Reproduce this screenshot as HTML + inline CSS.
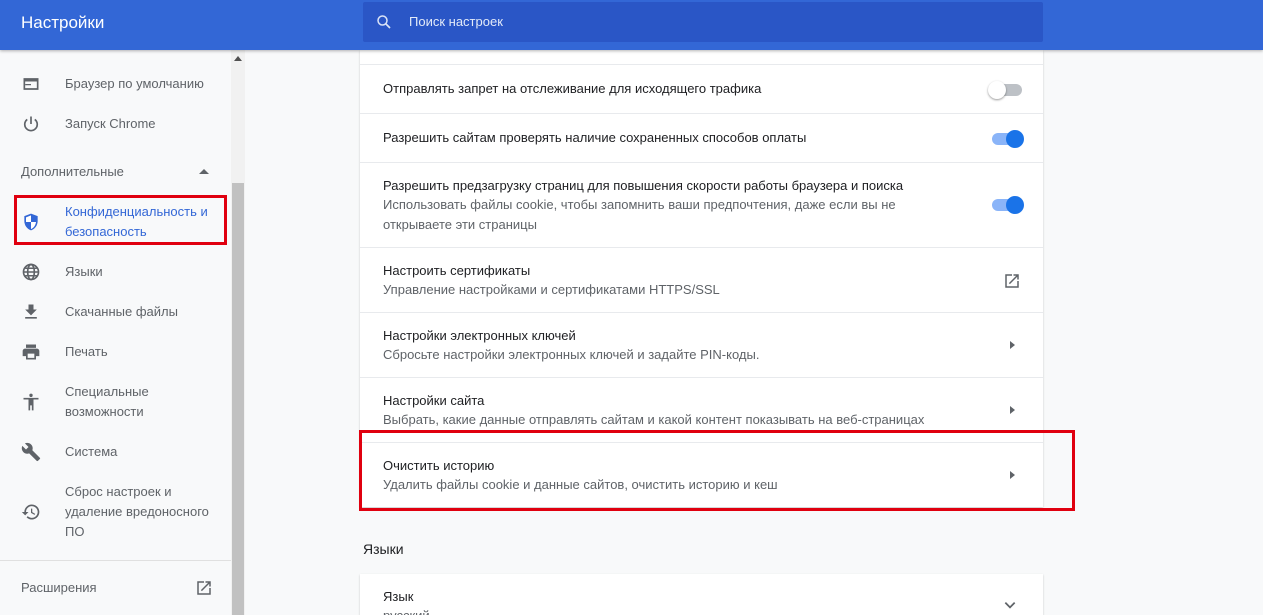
<!DOCTYPE html>
<html><head><meta charset="utf-8"><style>
*{margin:0;padding:0;box-sizing:border-box}
html{width:1263px;height:615px;overflow:hidden}
body{width:1263px;height:615px;overflow:hidden;background:#f8f9fa;font-family:"Liberation Sans",Arial,sans-serif;position:relative;color:#202124}
.hdr{position:absolute;left:0;top:0;width:1263px;height:50px;background:#3367d6;box-shadow:0 1px 3px rgba(0,0,0,.3);z-index:5}
.hdr .t{position:absolute;left:21px;top:13px;color:#fff;font-size:17px}
.srch{position:absolute;left:363px;top:2px;width:680px;height:40px;background:#2a56c6;border-radius:2px}
.srch span{position:absolute;left:46px;top:12px;color:#e3eaf8;font-size:13px}
.side{position:absolute;left:0;top:50px;width:231px;height:565px;background:#f8f9fa}
.sb{position:absolute;left:231px;top:50px;width:14px;height:565px;background:#f1f1f1}
.sb .th{position:absolute;left:1px;top:133px;width:12px;height:432px;background:#c1c1c1}
.it{position:absolute;left:65px;font-size:13px;color:#5f6368;line-height:20px}
.ic{position:absolute;left:21px;width:20px;height:20px}
.card{position:absolute;left:360px;top:50px;width:683px;height:457px;background:#fff;box-shadow:0 1px 2px rgba(0,0,0,.2)}
.row{position:absolute;left:0;width:683px;border-top:1px solid #e8eaed}
.p{position:absolute;left:23px;font-size:13px;color:#202124}
.s{position:absolute;left:23px;font-size:13px;color:#5f6368;line-height:20px}
.tg{position:absolute;left:632px;width:30px;height:12px;border-radius:6px}
.tg i{position:absolute;top:-3px;width:18px;height:18px;border-radius:50%}
.arr{position:absolute;left:650px;width:0;height:0;border-top:4px solid transparent;border-bottom:4px solid transparent;border-left:5px solid #5f6368}
.red{position:absolute;border:3px solid #e0000f}
</style></head><body>
<div class="hdr"><div class="t">Настройки</div>
<div class="srch"><svg style="position:absolute;left:12px;top:11px" width="18" height="18" viewBox="0 0 24 24"><circle cx="10" cy="10" r="6" fill="none" stroke="#dbe4f7" stroke-width="2"/><path d="M14.5 14.5L20 20" stroke="#dbe4f7" stroke-width="2.2"/></svg><span>Поиск настроек</span></div></div>

<div class="side">
<svg class="ic" style="top:24px" viewBox="0 0 24 24"><path d="M3 5h18v14H3z M5 9h14v8H5z" fill="#5f6368" fill-rule="evenodd"/><rect x="5" y="12" width="7" height="1.5" fill="#5f6368"/></svg>
<div class="it" style="top:24px">Браузер по умолчанию</div>
<svg class="ic" style="top:64px" viewBox="0 0 24 24"><path d="M12 3v9" stroke="#5f6368" stroke-width="2"/><path d="M7.5 6.5A7.5 7.5 0 1 0 16.5 6.5" fill="none" stroke="#5f6368" stroke-width="2"/></svg>
<div class="it" style="top:64px">Запуск Chrome</div>
<div class="it" style="left:21px;top:112px">Дополнительные</div>
<div style="position:absolute;left:199px;top:119px;border-left:5px solid transparent;border-right:5px solid transparent;border-bottom:5px solid #5f6368"></div>
<svg class="ic" style="top:162px" viewBox="0 0 24 24"><path d="M12 2L4 5v6c0 5 3.4 9.7 8 11 4.6-1.3 8-6 8-11V5z" fill="#3367d6"/><path d="M12 4v8H6V6.4zM12 12h6c-.5 4-3 7.4-6 8.5z" fill="#fff"/></svg>
<div class="it" style="top:152px;color:#3367d6">Конфиденциальность и<br>безопасность</div>
<svg class="ic" style="top:212px" viewBox="0 0 24 24"><circle cx="12" cy="12" r="9" fill="none" stroke="#5f6368" stroke-width="2"/><ellipse cx="12" cy="12" rx="4" ry="9" fill="none" stroke="#5f6368" stroke-width="2"/><path d="M3 12h18M5 7.5h14M5 16.5h14" stroke="#5f6368" stroke-width="1.8"/></svg>
<div class="it" style="top:212px">Языки</div>
<svg class="ic" style="top:252px" viewBox="0 0 24 24"><path d="M19 9h-4V3H9v6H5l7 7zM5 18v2h14v-2z" fill="#5f6368"/></svg>
<div class="it" style="top:252px">Скачанные файлы</div>
<svg class="ic" style="top:292px" viewBox="0 0 24 24"><path d="M19 8H5c-1.7 0-3 1.3-3 3v6h4v4h12v-4h4v-6c0-1.7-1.3-3-3-3zm-3 11H8v-5h8zM18 3H6v4h12z" fill="#5f6368"/></svg>
<div class="it" style="top:292px">Печать</div>
<svg class="ic" style="top:342px" viewBox="0 0 24 24"><circle cx="12" cy="4" r="2" fill="#5f6368"/><path d="M21 9h-6v13h-2v-6h-2v6H9V9H3V7h18z" fill="#5f6368"/></svg>
<div class="it" style="top:332px">Специальные<br>возможности</div>
<svg class="ic" style="top:392px" viewBox="0 0 24 24"><path d="M22.7 19l-9.1-9.1c.9-2.3.4-5-1.5-6.9-2-2-5-2.4-7.4-1.3L9 6 6 9 1.6 4.7C.4 7.1.9 10.1 2.9 12.1c1.9 1.9 4.6 2.4 6.9 1.5l9.1 9.1c.4.4 1 .4 1.4 0l2.3-2.3c.5-.4.5-1.1.1-1.4z" fill="#5f6368"/></svg>
<div class="it" style="top:392px">Система</div>
<svg class="ic" style="top:452px" viewBox="0 0 24 24"><path d="M13 3a9 9 0 0 0-9 9H1l4 4 4-4H6a7 7 0 1 1 2.1 5l-1.4 1.4A9 9 0 1 0 13 3zm-1 5v5l4.3 2.5.7-1.2-3.5-2.1V8z" fill="#5f6368"/></svg>
<div class="it" style="top:432px">Сброс настроек и<br>удаление вредоносного<br>ПО</div>
<div style="position:absolute;left:0;top:510px;width:231px;border-top:1px solid #e0e0e0"></div>
<div class="it" style="left:21px;top:528px">Расширения</div>
<svg style="position:absolute;left:195px;top:529px" width="18" height="18" viewBox="0 0 24 24"><path d="M19 19H5V5h7V3H3v18h18v-9h-2zM14 3v2h3.6l-9.8 9.8 1.4 1.4L19 6.4V10h2V3z" fill="#5f6368"/></svg>
</div>
<div class="red" style="left:14px;top:195px;width:213px;height:50px"></div>
<div class="sb"><div style="position:absolute;left:3px;top:6px;border-left:4px solid transparent;border-right:4px solid transparent;border-bottom:5px solid #505050"></div><div class="th"></div></div>

<div class="card">
<div class="row" style="top:14px;height:49px"><div class="p" style="top:16px">Отправлять запрет на отслеживание для исходящего трафика</div><div class="tg" style="top:19px;background:#bdc1c6"><i style="left:-4px;background:#fff;box-shadow:0 1px 2px rgba(0,0,0,.4)"></i></div></div>
<div class="row" style="top:63px;height:49px"><div class="p" style="top:16px">Разрешить сайтам проверять наличие сохраненных способов оплаты</div><div class="tg" style="top:19px;background:#8ab4f8"><i style="left:14px;background:#1a73e8"></i></div></div>
<div class="row" style="top:112px;height:85px"><div class="p" style="top:15px">Разрешить предзагрузку страниц для повышения скорости работы браузера и поиска</div><div class="s" style="top:32px">Использовать файлы cookie, чтобы запомнить ваши предпочтения, даже если вы не<br>открываете эти страницы</div><div class="tg" style="top:36px;background:#8ab4f8"><i style="left:14px;background:#1a73e8"></i></div></div>
<div class="row" style="top:197px;height:65px"><div class="p" style="top:15px">Настроить сертификаты</div><div class="s" style="top:32px">Управление настройками и сертификатами HTTPS/SSL</div><svg style="position:absolute;left:643px;top:24px" width="18" height="18" viewBox="0 0 24 24"><path d="M19 19H5V5h7V3H3v18h18v-9h-2zM14 3v2h3.6l-9.8 9.8 1.4 1.4L19 6.4V10h2V3z" fill="#5f6368"/></svg></div>
<div class="row" style="top:262px;height:65px"><div class="p" style="top:15px">Настройки электронных ключей</div><div class="s" style="top:32px">Сбросьте настройки электронных ключей и задайте PIN-коды.</div><div class="arr" style="top:28px"></div></div>
<div class="row" style="top:327px;height:65px"><div class="p" style="top:15px">Настройки сайта</div><div class="s" style="top:32px">Выбрать, какие данные отправлять сайтам и какой контент показывать на веб-страницах</div><div class="arr" style="top:28px"></div></div>
<div class="row" style="top:392px;height:65px"><div class="p" style="top:15px">Очистить историю</div><div class="s" style="top:32px">Удалить файлы cookie и данные сайтов, очистить историю и кеш</div><div class="arr" style="top:28px"></div></div>
</div>
<div class="red" style="left:359px;top:430px;width:716px;height:81px"></div>
<div style="position:absolute;left:363px;top:541px;font-size:14px;color:#202124">Языки</div>
<div class="card" style="top:574px;height:41px;overflow:hidden"><div class="p" style="top:15px">Язык</div><div class="s" style="top:32px">русский</div><svg style="position:absolute;left:643px;top:24px" width="14" height="14" viewBox="0 0 24 24"><path d="M4 8l8 8 8-8" fill="none" stroke="#5f6368" stroke-width="3"/></svg></div>
</body></html>
